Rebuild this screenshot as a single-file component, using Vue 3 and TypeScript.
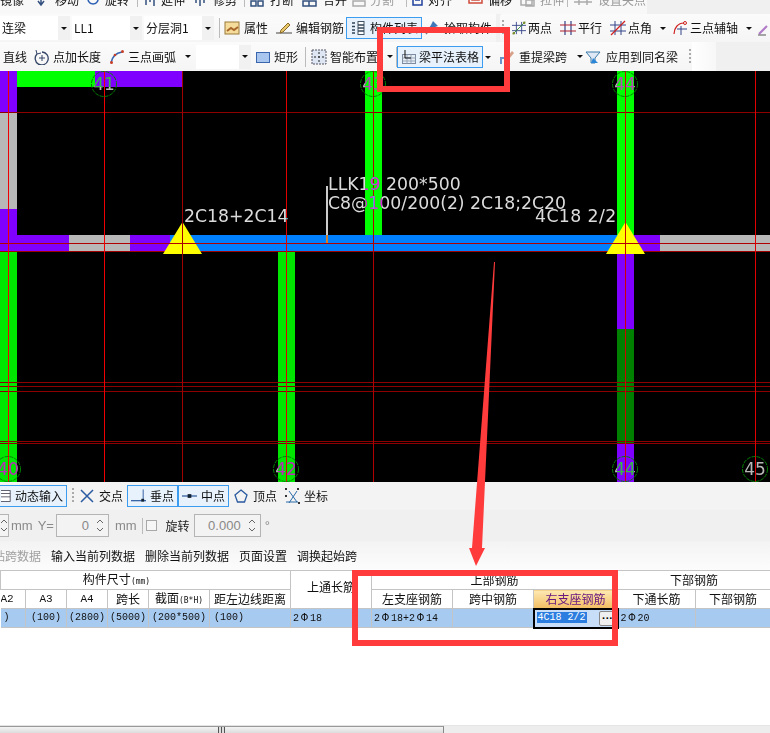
<script setup lang="ts">
// Beam rebar editor: clipped ribbon rows, black CAD canvas, snap bar and the flat-table grid.
// Two red annotation boxes and an arrow sit on top of everything.
const topTools = [
  { t: '镜像', w: 37, gap: 0, c: '', d: '', off: false, sep: false },
  { t: '移动', w: 50, gap: 4, c: '#33507f', d: 'M4 0v11M1 7l3 4 3-4', off: false, sep: false },
  { t: '旋转', w: 56, gap: 4, c: '#2f62b5', d: 'M6 0a5 5 0 1 0 .1 0', off: false, sep: false },
  { t: '延伸', w: 50, gap: 4, c: '#33507f', d: 'M0 3h9M11 0v12M3 3v8M7 3v5', off: false, sep: true },
  { t: '修剪', w: 57, gap: 6, c: '#33507f', d: 'M0 3h14M7 0v12M3 3v6M11 3v6', off: false, sep: false },
  { t: '打断', w: 52, gap: 6, c: '#33507f', d: 'M1 0h12v3H1zM1 7h5v5H1zM8 7h5v5H8z', off: false, sep: true },
  { t: '合并', w: 50, gap: 7, c: '#33507f', d: 'M1 0h13v3H1zM1 7h13v5H1zM7 7v5', off: false, sep: false },
  { t: '分割', w: 60, gap: 4, c: '#aaaaaa', d: 'M1 0h12v3H1zM1 7h12v5H1z', off: true, sep: false },
  { t: '对齐', w: 56, gap: 2, c: '#1f3f9a', d: 'M1 0h9v11H1zM3 6h5', off: false, sep: true },
  { t: '偏移', w: 52, gap: 6, c: '#d04a3a', d: 'M1 1h13v8H1zM4 4h7v2H4z', off: false, sep: false },
  { t: '拉伸', w: 53, gap: 6, c: '#aaaaaa', d: 'M1 0h11v11H1zM6 6h8v6H6z', off: true, sep: false },
  { t: '设置夹点', w: 74, gap: 11, c: '#aaaaaa', d: 'M1 8h18M6 1v10M14 3v8', off: true, sep: true },
]

const hLines = [
  { y: 112.5, c: '#8c0000' }, { y: 243.5, c: '#b00000' }, { y: 251.5, c: '#a00000' },
  { y: 382.5, c: '#8c0000' }, { y: 386.5, c: '#8c0000' }, { y: 391.5, c: '#8c0000' },
  { y: 441.5, c: '#8c0000' }, { y: 443.5, c: '#8c0000' },
]
const vLines = [
  { x: 8.5, c: '#f00000' }, { x: 104.5, c: '#f00000' }, { x: 182.5, c: '#a00000' },
  { x: 286.5, c: '#e00000' }, { x: 373.5, c: '#b00000' }, { x: 625.5, c: '#d00000' }, { x: 755.5, c: '#e00000' },
]
const blocks = [
  { x: 0, y: 71, w: 17, h: 41, c: '#8000ff' },
  { x: 0, y: 112, w: 17, h: 97, c: '#b8b8b8' },
  { x: 0, y: 209, w: 17, h: 26, c: '#8000ff' },
  { x: 17, y: 71, w: 78, h: 16, c: '#00ff00' },
  { x: 95, y: 71, w: 87, h: 16, c: '#8000ff' },
  { x: 0, y: 235, w: 69, h: 16, c: '#8000ff' },
  { x: 69, y: 235, w: 61, h: 16, c: '#b8b8b8' },
  { x: 130, y: 235, w: 40, h: 16, c: '#8000ff' },
  { x: 170, y: 235, w: 450, h: 16, c: '#0080ff' },
  { x: 620, y: 235, w: 40, h: 16, c: '#8000ff' },
  { x: 660, y: 235, w: 110, h: 16, c: '#b8b8b8' },
  { x: 0, y: 252, w: 17, h: 230, c: '#00e600' },
  { x: 365, y: 71, w: 17, h: 164, c: '#00ff00' },
  { x: 278, y: 252, w: 17, h: 230, c: '#00e600' },
  { x: 617, y: 71, w: 17, h: 164, c: '#00ff00' },
  { x: 617, y: 252, w: 17, h: 77, c: '#8000ff' },
  { x: 617, y: 329, w: 17, h: 114, c: '#008000' },
  { x: 617, y: 443, w: 17, h: 39, c: '#8000ff' },
]
const axes = [
  { x: 104, y: 84, t: '41' }, { x: 373, y: 84, t: '43' }, { x: 625, y: 84, t: '44' },
  { x: 8, y: 469, t: '40' }, { x: 286, y: 469, t: '42' }, { x: 625, y: 469, t: '44' }, { x: 755, y: 469, t: '45' },
]

const colWidths = [25, 41, 41, 41, 61, 81, 81, 81, 81, 84, 78, 75]
const sizeHeads = [
  { t: 'A2', s: '', cls: 'first mono' }, { t: 'A3', s: '', cls: 'mono' }, { t: 'A4', s: '', cls: 'mono' },
  { t: '跨长', s: '', cls: '' }, { t: '截面', s: '(B*H)', cls: '' }, { t: '距左边线距离', s: '', cls: '' },
]
const sizeCells = [
  { t: ')', cls: 'first' }, { t: '(100)', cls: 'center' }, { t: '(2800)', cls: 'center' },
  { t: '(5000)', cls: 'center' }, { t: '(200*500)', cls: 'center' }, { t: '(100)', cls: 'inset' },
]
</script>

<template>
  <div class="page">
    <div class="row row-top">
      <div class="top-inner">
        <span
          v-for="item in topTools"
          :key="item.t"
          class="top-tool"
          :class="{ faded: item.off, split: item.sep }"
          :style="{ width: item.w + 'px', gap: item.gap + 'px' }"
        >
          <svg v-if="item.d" class="top-ico" width="14" height="13" viewBox="0 0 14 13"><path :d="item.d" :stroke="item.c" fill="none" stroke-width="1.5" /></svg>
          {{ item.t }}
        </span>
      </div>
    </div>

    <div class="row row-a">
      <div class="group">
        <div class="combo"><span>连梁</span><b class="drop"></b></div>
        <div class="combo"><span>LL1</span><b class="drop"></b></div>
        <div class="combo"><span>分层洞1</span><b class="drop"></b></div>
        <i class="sep sep-a"></i>
        <span class="tool">
          <svg width="16" height="16" viewBox="0 0 16 16"><rect x="1" y="2" width="14" height="12" fill="#f6dc9a" stroke="#9a7a3a" /><path d="M3 11l4-3 3 2 4-3" stroke="#a8662a" stroke-width="2" fill="none" /></svg>属性
        </span>
        <span class="tool">
          <svg width="16" height="16" viewBox="0 0 16 16"><path d="M0 13h16" stroke="#444" /><path d="M5 10l7-7 2 2-7 7-3 1z" fill="#e8c66a" stroke="#8a6a2a" /></svg>编辑钢筋
        </span>
        <span class="tool active tool-list">
          <svg width="16" height="16" viewBox="0 0 16 16"><rect x="8" y="1.5" width="6" height="13" fill="#fff" stroke="#456" /><path d="M2 3h3M2 6.500h3M2 10h3M2 13h3M8 5h6M8 8h6M8 11h6" stroke="#345" stroke-width="1.300" /></svg>构件列表
        </span>
        <span class="tool tool-pick">
          <svg width="16" height="16" viewBox="0 0 16 16"><path d="M9 1l5 5-3 1-3 3-3-2 2-3z" fill="#3f78b8" /><path d="M6 9l-4 5" stroke="#777" stroke-width="1.500" /></svg>拾取构件
        </span>
      </div>
      <div class="group group-b">
        <i class="grip"></i>
        <span class="tool">
          <svg width="14" height="16" viewBox="0 0 16 16"><path d="M5 1v14M11 1v14M0 5h16M0 11h16" stroke="#334488" /><path d="M1 15L15 1" stroke="#2a8a2a" /><circle cx="2" cy="14" r="1.400" fill="#7a8a2a" /><circle cx="14" cy="2" r="1.400" fill="#7a8a2a" /></svg>两点
        </span>
        <span class="tool">
          <svg width="16" height="16" viewBox="0 0 16 16"><path d="M5 1v14M11 1v14" stroke="#334488" stroke-width="1.200" /><path d="M0 5h16M0 11h16" stroke="#b02030" stroke-width="1.200" /></svg>平行
        </span>
        <span class="tool tool-drop">
          <svg width="16" height="16" viewBox="0 0 16 16"><path d="M5 1v14M11 1v14M0 5h16M0 11h16" stroke="#334488" /><path d="M1 15L15 1" stroke="#d02020" stroke-width="1.200" /></svg>点角<b class="arrow"></b>
        </span>
        <span class="tool tool-drop">
          <svg width="16" height="16" viewBox="0 0 16 16"><path d="M2 14C2 8 6 3 12 3" stroke="#d02020" fill="none" stroke-width="1.200" /><path d="M9 6v9M5 9h10" stroke="#334488" /><circle cx="13" cy="3" r="1.500" fill="none" stroke="#d02020" /></svg>三点辅轴<b class="arrow"></b>
        </span>
        <svg width="14" height="16" viewBox="0 0 14 16"><path d="M1 14l8-8" stroke="#b07ac8" stroke-width="2" /><path d="M0 15h8" stroke="#555" /></svg>
      </div>
    </div>

    <div class="row row-b">
      <div class="group group-c">
        <span class="tool tool-line">直线</span>
        <span class="tool">
          <svg width="16" height="16" viewBox="0 0 16 16"><path d="M3 5a6.500 6.500 0 1 0 5-2" stroke="#334466" stroke-width="1.300" fill="none" /><path d="M8 6v6M5 9h6M2 1l1 4 4-1" stroke="#334466" fill="none" /></svg>点加长度
        </span>
        <span class="tool tool-drop">
          <svg width="16" height="16" viewBox="0 0 16 16"><path d="M2 14C3 8 7 4 13 3" stroke="#3a66b0" fill="none" stroke-width="1.600" /><circle cx="2.500" cy="13.500" r="1.500" fill="#c8402a" /><circle cx="6" cy="6" r="1.300" fill="#c8402a" /><circle cx="13.500" cy="2.500" r="1.500" fill="#c8402a" /></svg>三点画弧<b class="arrow"></b>
        </span>
        <div class="combo combo-blank"><span></span><b class="drop"></b></div>
        <span class="tool tool-rect">
          <svg width="16" height="16" viewBox="0 0 16 16"><rect x="1.500" y="3.500" width="13" height="10" fill="#a9c6ee" stroke="#3a66b0" /></svg>矩形
        </span>
        <i class="sep"></i>
        <span class="tool tool-drop tool-smart">
          <svg width="16" height="16" viewBox="0 0 16 16"><rect x="1" y="1" width="14" height="14" fill="#dde6f2" stroke="#556" stroke-dasharray="2 1" /><path d="M8 3v10M3 8h10" stroke="#222" stroke-dasharray="2 2" /></svg>智能布置<b class="arrow"></b>
        </span>
        <i class="sep"></i>
        <span class="tool active tool-table">
          <svg width="16" height="16" viewBox="0 0 16 16"><rect x="1.500" y="5.500" width="13" height="9" fill="#e8eef6" stroke="#7d8ba0" /><path d="M1.500 9h13M1.500 12h13M6 5.500v9M10 5.500v9" stroke="#9aa7b8" /><path d="M4 1v8h6" stroke="#111" fill="none" /></svg>梁平法表格<b class="arrow arrow-out"></b>
        </span>
        <span class="tool tool-lift">
          <svg width="16" height="16" viewBox="0 0 16 16"><path d="M2 15V9h6v6" stroke="#6a94c8" stroke-width="2" fill="none" /><path d="M8 8l5-6 2 2-5 6z" fill="#d8a088" /></svg>重提梁跨<b class="arrow"></b>
        </span>
        <span class="tool tool-apply">
          <svg width="16" height="16" viewBox="0 0 16 16"><path d="M1 3h14l-5 6v5H6V9z" fill="#dfe9f5" stroke="#3a7aa8" /><path d="M8 9l5 5H6z" fill="#2c86d8" /></svg>应用到同名梁
        </span>
        <i class="grip grip-end"></i>
      </div>
      <div class="blank-end"></div>
    </div>

    <div class="canvas">
      <svg class="cad" width="770" height="411" viewBox="0 71 770 411">
        <rect v-for="(b, i) in blocks" :key="i" :x="b.x" :y="b.y" :width="b.w" :height="b.h" :fill="b.c" />
        <line v-for="l in hLines" :key="l.y" x1="0" x2="770" :y1="l.y" :y2="l.y" :stroke="l.c" />
        <line v-for="l in vLines" :key="l.x" :x1="l.x" :x2="l.x" y1="71" y2="482" :stroke="l.c" />
        <polygon points="182.500,222 202,254 163,254" fill="#ffff00" />
        <polygon points="625.500,222 645,254 606,254" fill="#ffff00" />
        <line x1="182.500" x2="182.500" y1="222" y2="254" stroke="#a00000" />
        <line x1="625.500" x2="625.500" y1="222" y2="254" stroke="#d00000" />
        <line x1="163" x2="202" y1="243.500" y2="243.500" stroke="#b00000" />
        <line x1="606" x2="645" y1="243.500" y2="243.500" stroke="#b00000" />
        <line x1="327" x2="327" y1="186" y2="235" stroke="#fff" stroke-width="1.600" />
        <line x1="327" x2="327" y1="235" y2="243" stroke="#ff8000" stroke-width="1.600" />
        <text class="cad-label" x="328" y="190">LLK19 200*500</text>
        <text class="cad-label" x="328" y="209">C8@100/200(2) 2C18;2C20</text>
        <text class="cad-label" x="184" y="222">2C18+2C14</text>
        <text class="cad-label cad-right" x="535" y="222">4C18 2/2</text>
        <g v-for="a in axes" :key="a.x + a.t">
          <circle :cx="a.x" :cy="a.y" r="12.500" fill="none" stroke="#008000" stroke-dasharray="4 1" />
          <text class="cad-axis" :x="a.x" :y="a.y + 6">{{ a.t }}</text>
        </g>
      </svg>
    </div>

    <div class="row row-snap">
      <span class="tool active snap-first">
        <svg width="12" height="16" viewBox="0 0 12 16"><rect x="-3" y="1.500" width="14" height="13" fill="#fff" stroke="#445" /><path d="M-3 5h14M-3 9h14" stroke="#445" /></svg>动态输入
      </span>
      <i class="grip grip-snap"></i>
      <span class="tool tool-cross">
        <svg width="16" height="16" viewBox="0 0 16 16"><path d="M2 2l12 12M14 2L2 14" stroke="#2a5aa0" stroke-width="1.500" /></svg>交点
      </span>
      <span class="tool active snap-pair">
        <svg width="16" height="16" viewBox="0 0 16 16"><path d="M0 13h16" stroke="#2a5aa0" stroke-width="1.300" /><path d="M13 1v12" stroke="#2a5aa0" /><rect x="11" y="11" width="3" height="3" fill="#123" /></svg>垂点
      </span>
      <span class="tool active snap-pair">
        <svg width="16" height="16" viewBox="0 0 16 16"><path d="M0 8h16" stroke="#2a5aa0" stroke-width="1.300" /><rect x="6" y="6" width="4" height="4" fill="#123" /></svg>中点
      </span>
      <span class="tool tool-vertex">
        <svg width="16" height="16" viewBox="0 0 16 16"><path d="M8 2l6 5-2.500 7h-7L2 7z" fill="none" stroke="#2a5aa0" stroke-width="1.300" /></svg>顶点
      </span>
      <span class="tool">
        <svg width="16" height="16" viewBox="0 0 16 16"><path d="M2 14h12M5 15L13 3M5 3l8 11" stroke="#2a6aa8" /><path d="M1 1h2M13 1h2M1 8h2M14 15h2" stroke="#333" stroke-width="2" /></svg>坐标
      </span>
    </div>

    <div class="row row-coord">
      <div class="spin spin-cut"><em></em></div>
      <span class="unit unit-first">mm</span>
      <span class="unit unit-y">Y=</span>
      <div class="spin spin-y"><span>0</span><em></em></div>
      <span class="unit unit-second">mm</span>
      <i class="sep sep-coord"></i>
      <i class="check"></i>
      <span class="rotate">旋转</span>
      <div class="spin spin-rot"><span>0.000</span><em></em></div>
      <span class="unit unit-deg">°</span>
    </div>

    <div class="row row-grid-tools">
      <span class="gt gt-off">粘贴跨数据</span>
      <span class="gt">输入当前列数据</span>
      <span class="gt">删除当前列数据</span>
      <span class="gt">页面设置</span>
      <span class="gt">调换起始跨</span>
    </div>

    <table class="grid">
      <colgroup><col v-for="(w, i) in colWidths" :key="i" :width="w" /></colgroup>
      <tbody>
        <tr class="h1">
          <th colspan="6" class="size-title">构件尺寸<small>(mm)</small></th>
          <th rowspan="2" class="upper">上通长筋</th>
          <th colspan="3">上部钢筋</th>
          <th colspan="2">下部钢筋</th>
        </tr>
        <tr class="h2">
          <th v-for="h in sizeHeads" :key="h.t" :class="h.cls">{{ h.t }}<small v-if="h.s">{{ h.s }}</small></th>
          <th>左支座钢筋</th>
          <th>跨中钢筋</th>
          <th class="cur">右支座钢筋</th>
          <th>下通长筋</th>
          <th>下部钢筋</th>
        </tr>
        <tr class="data">
          <td v-for="(c, i) in sizeCells" :key="i" :class="c.cls">{{ c.t }}</td>
          <td>2<span class="rb">Φ</span>18</td>
          <td>2<span class="rb">Φ</span>18+2<span class="rb">Φ</span>14</td>
          <td></td>
          <td class="editing"><span class="sel">4C18 2/2</span><button class="more" type="button">···</button></td>
          <td>2<span class="rb">Φ</span>20</td>
          <td></td>
        </tr>
      </tbody>
    </table>

    <div class="empty"></div>
    <div class="scroll"><div class="thumb"><i></i></div></div>

    <div class="mark mark-a"></div>
    <div class="mark mark-b"></div>
    <svg class="pointer" width="770" height="733" viewBox="0 0 770 733">
      <polygon points="494,262 495,262 482,548 485,548 476,566 469,548 472,548" fill="#ff3b3b" />
    </svg>
  </div>
</template>

<style>
html, body { margin: 0; background: #fff; overflow: hidden; }
</style>

<style scoped>
.page {
  position: relative;
  width: 770px;
  height: 733px;
  overflow: hidden;
  font-family: "Noto Sans CJK SC", "Noto Sans", sans-serif;
  font-size: 12px;
  line-height: 16px;
  color: #111;
  background: #fff;
}
.row {
  display: flex;
  align-items: center;
  background: #f0f0f0;
  box-sizing: border-box;
  white-space: nowrap;
}
.row-top { height: 14px; overflow: hidden; align-items: flex-start; }
.top-inner { display: flex; align-items: flex-start; margin-top: -8px; width: 647px; height: 22px; background: #f8f8f8; }
.top-tool { position: relative; display: flex; align-items: center; flex: none; }
.top-tool.faded { color: #999; }
.top-tool.split::before {
  content: '';
  position: absolute;
  left: -6px;
  top: 0;
  width: 1px;
  height: 15px;
  background: #bbb;
}
.top-ico { flex: none; overflow: visible; }
.row-a { height: 28px; }
.row-b { height: 29px; }
.group {
  display: flex;
  align-items: center;
  height: 100%;
  background: linear-gradient(#fbfbfb, #f5f5f5);
}
.group-b { margin-left: 4px; flex: 1; border-radius: 3px 0 0 3px; }
.group-b .tool { gap: 2px; margin-right: 8px; }
.group-b .tool-drop { margin-right: 6px; }
.group-b .tool-drop .arrow { margin-left: 6px; }
.group-c { width: 692px; flex: none; }
.blank-end { width: 24px; height: 100%; background: linear-gradient(90deg, #fff, #f7f7f7); }
.combo {
  display: flex;
  flex: none;
  align-items: center;
  justify-content: space-between;
  width: 70px;
  height: 24px;
  margin-right: 2px;
  padding-left: 2px;
  box-sizing: border-box;
  background: #fff;
}
.combo-blank { width: 55px; margin: 0 4px 0 -4px; }
.drop { display: flex; width: 12px; height: 24px; background: #f1f1f1; }
.drop::after,
.arrow::after {
  content: '';
  border: 3px solid transparent;
  border-top: 3px solid #111;
  border-bottom: 0;
}
.drop::after { margin: auto; }
.arrow { display: inline-flex; margin-left: 6px; width: 6px; }
.arrow-out { position: absolute; right: -9px; top: 9px; margin: 0; }
.sep { width: 1px; height: 20px; margin: 0 5px 0 3px; background: #bbb; flex: none; }
.sep-a { margin: 0 4px 0 3px; }
.grip {
  width: 2px;
  height: 16px;
  margin: 0 8px 0 2px;
  flex: none;
  background: repeating-linear-gradient(#aaa 0 2px, transparent 2px 4px);
}
.grip-end { margin: 0 0 0 3px; }
.grip-snap { margin: 0 5px 0 5px; }
.tool {
  position: relative;
  display: inline-flex;
  flex: none;
  align-items: center;
  gap: 4px;
  height: 22px;
  margin-right: 8px;
}
.tool.active {
  padding: 0 3px;
  border: 1px solid #3c9cf0;
  background: #e8f2fc;
  box-sizing: border-box;
}
.tool-list { margin: 0 2px 0 -6px; }
.tool-pick { margin-right: 4px; }
.row-b .tool { gap: 3px; }
.tool-line { margin: 0 7px 0 3px; }
.tool-drop { margin-right: 9px; }
.tool-rect { margin-right: 4px; }
.tool-smart { margin-right: 0; }
.row-b .tool-table { gap: 2px; width: 86px; margin: 0 16px 0 -5px; }
.row-b .tool-lift { gap: 4px; margin-right: 2px; }
.row-b .tool-apply { gap: 5px; margin-right: 8px; }
.canvas { height: 411px; background: #000; overflow: hidden; }
.cad { display: block; }
.cad-label {
  font-family: "DejaVu Sans", sans-serif;
  font-size: 17.300px;
  fill: #dcdcdc;
  mix-blend-mode: difference;
}
.cad-right { letter-spacing: 0.4px; }
.cad-axis {
  font-family: "DejaVu Sans", sans-serif;
  font-size: 17px;
  fill: #b8b8b8;
  text-anchor: middle;
  mix-blend-mode: difference;
}
.row-snap { height: 28px; background: #f3f3f3; }
.row-snap .snap-first { width: 69px; margin: 0 0 0 -2px; padding: 0 3px 0 2px; }
.tool-cross { margin-right: 4px; }
.row-snap .snap-pair { width: 51px; margin: 0; }
.tool-vertex { margin-left: 4px; margin-right: 7px; }
.row-coord { height: 31px; color: #8a8a8a; }
.spin {
  position: relative;
  display: flex;
  align-items: center;
  justify-content: flex-end;
  height: 23px;
  box-sizing: border-box;
  padding-right: 19px;
  border: 1px solid #b4b4b4;
  background: #f3f3f3;
  color: #888;
  font-family: "Liberation Sans", sans-serif;
  font-size: 13px;
}
.spin em {
  position: absolute;
  right: 5px;
  top: 4px;
  width: 6px;
  height: 13px;
  background:
    linear-gradient(135deg, transparent 48%, #666 50% 60%, transparent 62%) 0 0 / 3px 4px no-repeat,
    linear-gradient(225deg, transparent 48%, #666 50% 60%, transparent 62%) 3px 0 / 3px 4px no-repeat,
    linear-gradient(45deg, transparent 48%, #666 50% 60%, transparent 62%) 0 9px / 3px 4px no-repeat,
    linear-gradient(315deg, transparent 48%, #666 50% 60%, transparent 62%) 3px 9px / 3px 4px no-repeat;
}
.spin-cut { width: 9px; padding: 0; border-left: 0; }
.spin-cut em { right: 1px; }
.spin-y { width: 53px; margin-left: 2px; }
.spin-rot { width: 67px; margin-left: 4px; }
.unit { font-family: "Liberation Sans", sans-serif; font-size: 13px; }
.unit-first { margin-left: 2px; }
.unit-y { margin-left: 5px; }
.unit-second { margin-left: 6px; }
.unit-deg { margin-left: 4px; }
.sep-coord { margin: 0 3px 0 5px; height: 16px; }
.check { width: 11px; height: 11px; border: 1px solid #a8a8a8; box-sizing: border-box; flex: none; background: #f6f6f6; }
.rotate { margin-left: 9px; color: #222; }
.row-grid-tools { height: 29px; background: linear-gradient(#f3f3f3, #fcfcfc); }
.gt { margin-right: 10px; }
.gt-off { margin-left: -19px; color: #a0a0a0; }
.grid {
  table-layout: fixed;
  width: 770px;
  border-collapse: collapse;
}
.grid th,
.grid td {
  box-sizing: border-box;
  padding: 0;
  border: 1px solid #c4c4c4;
  overflow: hidden;
  white-space: nowrap;
  font-weight: 400;
  font-size: 12px;
  line-height: 14px;
  text-align: center;
}
.grid .first { border-left: 0; text-align: left; }
.grid .mono { font-family: "Liberation Mono", monospace; font-size: 11px; }
.grid small { font-family: "DejaVu Sans Mono", monospace; font-size: 8px; }
.grid .h1 th { height: 19px; background: #fff; }
.grid .h2 th { height: 19px; background: #fff; }
.grid .h1 .size-title { padding-right: 58px; }
.grid .upper { padding-bottom: 6px; }
.grid .cur { background: linear-gradient(#fde9b4, #f3bd62) !important; color: #6b1a80; }
.grid td {
  height: 19px;
  background: #a6caf0;
  text-align: left;
  padding-left: 2px;
  font-family: "Liberation Mono", monospace;
  font-size: 10px;
}
.grid td.center { text-align: center; padding: 0; }
.grid td.first { padding-left: 3px; }
.grid td.inset { padding-left: 4px; }
.rb { display: inline-block; width: 11px; text-align: center; font-family: "DejaVu Sans", sans-serif; font-size: 10px; }
.grid td.editing {
  position: relative;
  padding: 0 0 0 2px;
  border: 2px solid #000;
  background: #c8def8;
}
.sel { padding: 0 1px; background: #2b7de0; color: #fff; }
.more {
  position: absolute;
  right: 0;
  top: 1px;
  width: 18px;
  height: 15px;
  padding: 0;
  border: 1px solid #888;
  border-radius: 2px;
  background: #efefef;
  font-size: 11px;
  font-weight: 700;
  line-height: 10px;
}
.empty { height: 96px; background: #fff; }
.scroll {
  height: 9px;
  background: #ededed;
  border-top: 1px solid #e4e4e4;
  box-sizing: border-box;
}
.thumb {
  display: flex;
  justify-content: center;
  width: 444px;
  height: 100%;
  box-sizing: border-box;
  border-top: 1px solid #999;
  border-right: 1px solid #888;
  background: linear-gradient(#f4f4f4, #d8d8d8);
}
.thumb i {
  width: 7px;
  background: repeating-linear-gradient(90deg, #555 0 1px, #ddd 1px 3px);
}
.mark {
  position: absolute;
  box-sizing: border-box;
  border: 6px solid #ff3b3b;
}
.mark-a { left: 377px; top: 27px; width: 133px; height: 65px; }
.mark-b { left: 352px; top: 570px; width: 266px; height: 76px; }
.pointer { position: absolute; left: 0; top: 0; pointer-events: none; }
</style>
